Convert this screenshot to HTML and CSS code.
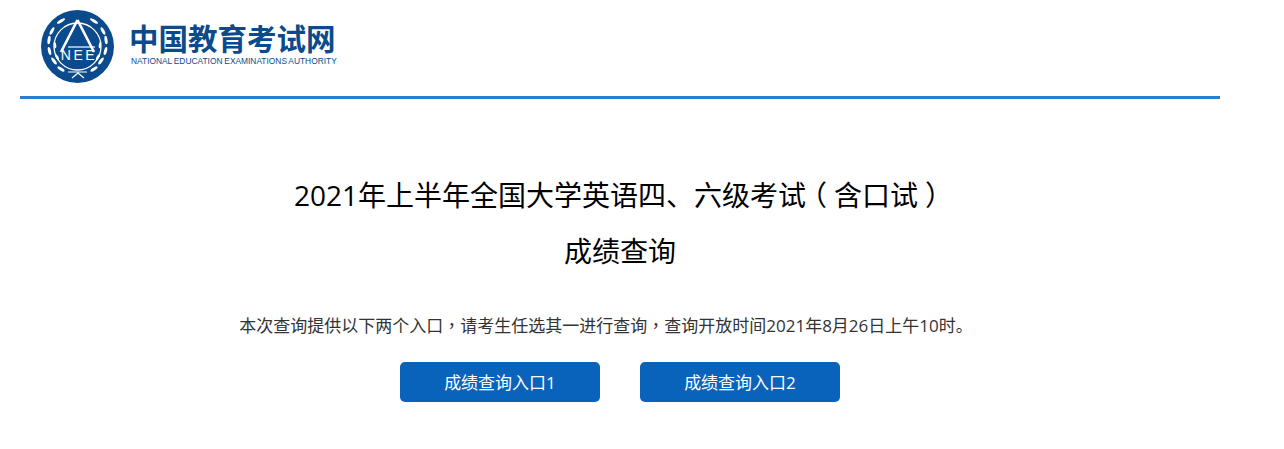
FILE: index.html
```html
<!DOCTYPE html>
<html lang="zh-CN">
<head>
    <meta charset="UTF-8">
    <meta name="viewport" content="width=device-width, initial-scale=1.0">
    <title>成绩查询</title>
    <link rel="stylesheet" href="styles.css">
</head>
<body>

<div class="wrap">
    <header class="top">
        <svg class="emblem" viewBox="0 0 73 73" width="73" height="73" aria-hidden="true">
            <circle cx="36.5" cy="36.5" r="36.5" fill="#0b4a8c"/>
            <circle cx="36.5" cy="36.5" r="23.5" fill="none" stroke="#fff" stroke-width="1.3"/>
            <path d="M36.5 10 L20 42 M36.5 10 L53 42" stroke="#fff" stroke-width="2.6" fill="none"/>
            <path d="M27 37 H54" stroke="#fff" stroke-width="1.2"/>
            <text x="38" y="49.5" class="emblem-text" text-anchor="middle">NEE</text>
            <g fill="#fff">
                <ellipse cx="8" cy="30" rx="1.5" ry="4.2" transform="rotate(8 8 30)"/>
                <ellipse cx="8.5" cy="41" rx="1.5" ry="4.2" transform="rotate(-14 8.5 41)"/>
                <ellipse cx="13" cy="51" rx="1.5" ry="4.2" transform="rotate(-36 13 51)"/>
                <ellipse cx="20" cy="59" rx="1.5" ry="4.2" transform="rotate(-56 20 59)"/>
                <ellipse cx="11" cy="21" rx="1.5" ry="4.2" transform="rotate(28 11 21)"/>
                <ellipse cx="20" cy="11" rx="1.5" ry="4.6" transform="rotate(58 20 11)"/>
                <ellipse cx="14" cy="35" rx="1.2" ry="3.4" transform="rotate(-8 14 35)"/>
                <ellipse cx="16" cy="47" rx="1.2" ry="3.4" transform="rotate(-32 16 47)"/>
                <ellipse cx="65" cy="30" rx="1.5" ry="4.2" transform="rotate(-8 65 30)"/>
                <ellipse cx="64.5" cy="41" rx="1.5" ry="4.2" transform="rotate(14 64.5 41)"/>
                <ellipse cx="60" cy="51" rx="1.5" ry="4.2" transform="rotate(36 60 51)"/>
                <ellipse cx="53" cy="59" rx="1.5" ry="4.2" transform="rotate(56 53 59)"/>
                <ellipse cx="62" cy="21" rx="1.5" ry="4.2" transform="rotate(-28 62 21)"/>
                <ellipse cx="53" cy="11" rx="1.5" ry="4.6" transform="rotate(-58 53 11)"/>
                <ellipse cx="59" cy="35" rx="1.2" ry="3.4" transform="rotate(8 59 35)"/>
                <ellipse cx="57" cy="47" rx="1.2" ry="3.4" transform="rotate(32 57 47)"/>
            </g>
            <path d="M27 62 H46 M31 68 L37 63 L43 68" stroke="#fff" stroke-width="1.2" fill="none"/>
        </svg>
        <div class="brand">
            <div class="brand-cn">中国教育考试网</div>
            <div class="brand-en">NATIONAL EDUCATION EXAMINATIONS AUTHORITY</div>
        </div>
    </header>

    <main class="content">
        <h1 class="title">2021年上半年全国大学英语四、六级考试<span class="paren">（</span>含口试<span class="paren">）</span></h1>
        <h1 class="title">成绩查询</h1>
        <p class="note">本次查询提供以下两个入口<span class="comma" lang="zh-TW">，</span>请考生任选其一进行查询<span class="comma" lang="zh-TW">，</span>查询开放时间2021年8月26日上午10时。</p>
        <div class="links">
            <a class="btn" href="#">成绩查询入口1</a>
            <a class="btn" href="#">成绩查询入口2</a>
        </div>
    </main>
</div>

</body>
</html>
```

FILE: styles.css
```css
body {
    font-family: "Open Sans", "Noto Sans CJK SC", sans-serif;
    background-color: #fff;
    margin: 0;
    padding: 0;
    color: #000;
}

.wrap {
    width: 1200px;
    margin-left: 20px;
}

.top {
    display: flex;
    align-items: center;
    height: 99px;
    padding-left: 21px;
    box-sizing: border-box;
    border-bottom: 3px solid #2b7ec9;
}

.emblem {
    flex: none;
    margin-top: -4px;
}

.emblem-text {
    font-family: "Liberation Sans", sans-serif;
    font-size: 14px;
    letter-spacing: 2.6px;
    fill: #fff;
}

.brand {
    margin-left: 17px;
    margin-top: -9px;
    color: #0b4a8c;
}

.brand-cn {
    font-family: "Noto Sans CJK SC", sans-serif;
    font-size: 29.5px;
    font-weight: 700;
    line-height: 32px;
    margin-left: -2px;
}

.brand-en {
    font-family: "Liberation Sans", sans-serif;
    font-size: 8.4px;
    line-height: 10px;
    margin-top: 3px;
    word-spacing: -0.5px;
    white-space: nowrap;
}

.content {
    text-align: center;
    padding-top: 68px;
}

.title {
    font-size: 28px;
    font-weight: 400;
    line-height: 56px;
    margin: 0;
}

/* full width brackets sit centred in their box in the original font */
.paren {
    font-feature-settings: "halt";
    padding: 0 7px;
}

.comma {
    font-family: "Noto Sans CJK TC", sans-serif;
}

.note {
    font-size: 17px;
    line-height: 28px;
    color: #333;
    margin: 32px 0 0;
    padding-right: 28px;
}

.links {
    display: flex;
    justify-content: center;
    gap: 40px;
    margin-top: 22px;
}

.btn {
    width: 200px;
    height: 40px;
    line-height: 42px;
    background-color: #0a63bb;
    color: #fff;
    font-size: 17px;
    border-radius: 5px;
    text-decoration: none;
}
```
